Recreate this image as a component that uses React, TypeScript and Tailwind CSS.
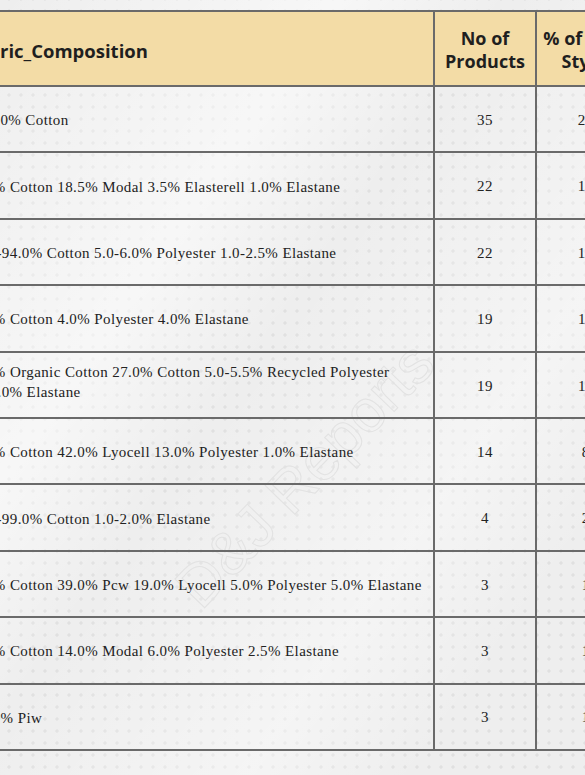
import React from "react";

type Row = {
  lines: { text: string; shift: number }[];
  count: string;
  pct: string;
};

const rows: Row[] = [
  { lines: [{ text: "100% Cotton", shift: 19.6 }], count: "35", pct: "20.71%" },
  { lines: [{ text: "77.0% Cotton 18.5% Modal 3.5% Elasterell 1.0% Elastane", shift: 0 }], count: "22", pct: "13.02%" },
  { lines: [{ text: "93.0-94.0% Cotton 5.0-6.0% Polyester 1.0-2.5% Elastane", shift: 3.6 }], count: "22", pct: "13.02%" },
  { lines: [{ text: "92.0% Cotton 4.0% Polyester 4.0% Elastane", shift: 0 }], count: "19", pct: "11.24%" },
  {
    lines: [
      { text: "66.5% Organic Cotton 27.0% Cotton 5.0-5.5% Recycled Polyester", shift: 0 },
      { text: "1.0% Elastane", shift: 24.6 },
    ],
    count: "19",
    pct: "11.24%",
  },
  { lines: [{ text: "44.0% Cotton 42.0% Lyocell 13.0% Polyester 1.0% Elastane", shift: 0 }], count: "14", pct: "8.28%" },
  { lines: [{ text: "98.0-99.0% Cotton 1.0-2.0% Elastane", shift: 3.6 }], count: "4", pct: "2.37%" },
  { lines: [{ text: "32.0% Cotton 39.0% Pcw 19.0% Lyocell 5.0% Polyester 5.0% Elastane", shift: 0 }], count: "3", pct: "1.78%" },
  { lines: [{ text: "77.5% Cotton 14.0% Modal 6.0% Polyester 2.5% Elastane", shift: 0 }], count: "3", pct: "1.78%" },
  { lines: [{ text: "100% Piw", shift: 11.9 }], count: "3", pct: "1.78%" },
];

const serif = "[font-family:'Liberation_Serif','Times_New_Roman',serif]";

export default function App() {
  return (
    <div className="relative h-[775px] w-full overflow-hidden bg-[#eeeeee]">
      {/* dot pattern */}
      <div className="pointer-events-none absolute inset-0 bg-[radial-gradient(circle,#e0e0e0_1.4px,transparent_1.8px)] bg-[length:12px_12px] bg-[position:3px_5px]" />
      {/* soft light bands */}
      <div className="pointer-events-none absolute inset-0 bg-[linear-gradient(125deg,rgba(255,255,255,0)_0%,rgba(255,255,255,0.55)_30%,rgba(255,255,255,0)_45%,rgba(255,255,255,0.4)_70%,rgba(255,255,255,0)_85%)]" />

      {/* watermark */}
      <div className="pointer-events-none absolute left-[305px] top-[475px] -translate-x-1/2 -translate-y-1/2 -rotate-[46deg] whitespace-nowrap text-[60px] font-normal text-transparent [-webkit-text-stroke:1px_#e2e2e2] [font-family:'Liberation_Sans',Arial,sans-serif]">
        D&amp;J Reports
      </div>

      <div className="relative pt-[10px]">
        <div className="ml-[-60px] w-[699px] border-t-2 border-[#6a6a6a]">
          {/* header */}
          <div className="flex h-[75px] border-b-2 border-[#6a6a6a] bg-[#f3dca6] text-[18px] font-bold leading-[23px] text-[#1f1f1f] [font-family:'Open_Sans','Noto_Sans',sans-serif]">
            <div className="flex w-[495px] shrink-0 items-center border-r-2 border-[#6a6a6a] pl-[27px] pt-[3px] text-[18.5px]">
              Fabric_Composition
            </div>
            <div className="flex w-[102px] shrink-0 items-center justify-center border-r-2 border-[#6a6a6a] pt-[2px] text-center">
              No of
              <br />
              Products
            </div>
            <div className="flex w-[102px] shrink-0 items-center justify-center border-r-2 border-[#6a6a6a] pl-[2px] pt-[2px] text-center">
              % of Total
              <br />
              Styles
            </div>
          </div>

          {rows.map((r, i) => (
            <div
              key={i}
              className={`flex h-[66.4px] border-b-2 border-[#6a6a6a] text-[15px] tracking-[0.4px] text-[#222222] ${serif}`}
            >
              <div
                className={`flex w-[495px] shrink-0 flex-col justify-center whitespace-nowrap border-r-2 border-[#6a6a6a] pl-[25px] leading-[20px] ${
                  r.lines.length > 1 ? "pb-[6px]" : "pt-[2px]"
                }`}
              >
                {r.lines.map((l, j) => (
                  <span key={j} className="block" style={{ marginLeft: l.shift }}>
                    {l.text}
                  </span>
                ))}
              </div>
              <div className="flex w-[102px] shrink-0 items-center justify-center border-r-2 border-[#6a6a6a] pt-[2px]">
                {r.count}
              </div>
              <div className="flex w-[102px] shrink-0 items-center justify-center border-r-2 border-[#6a6a6a] pl-[30px] pt-[2px]">
                {r.pct}
              </div>
            </div>
          ))}
        </div>
      </div>
    </div>
  );
}
